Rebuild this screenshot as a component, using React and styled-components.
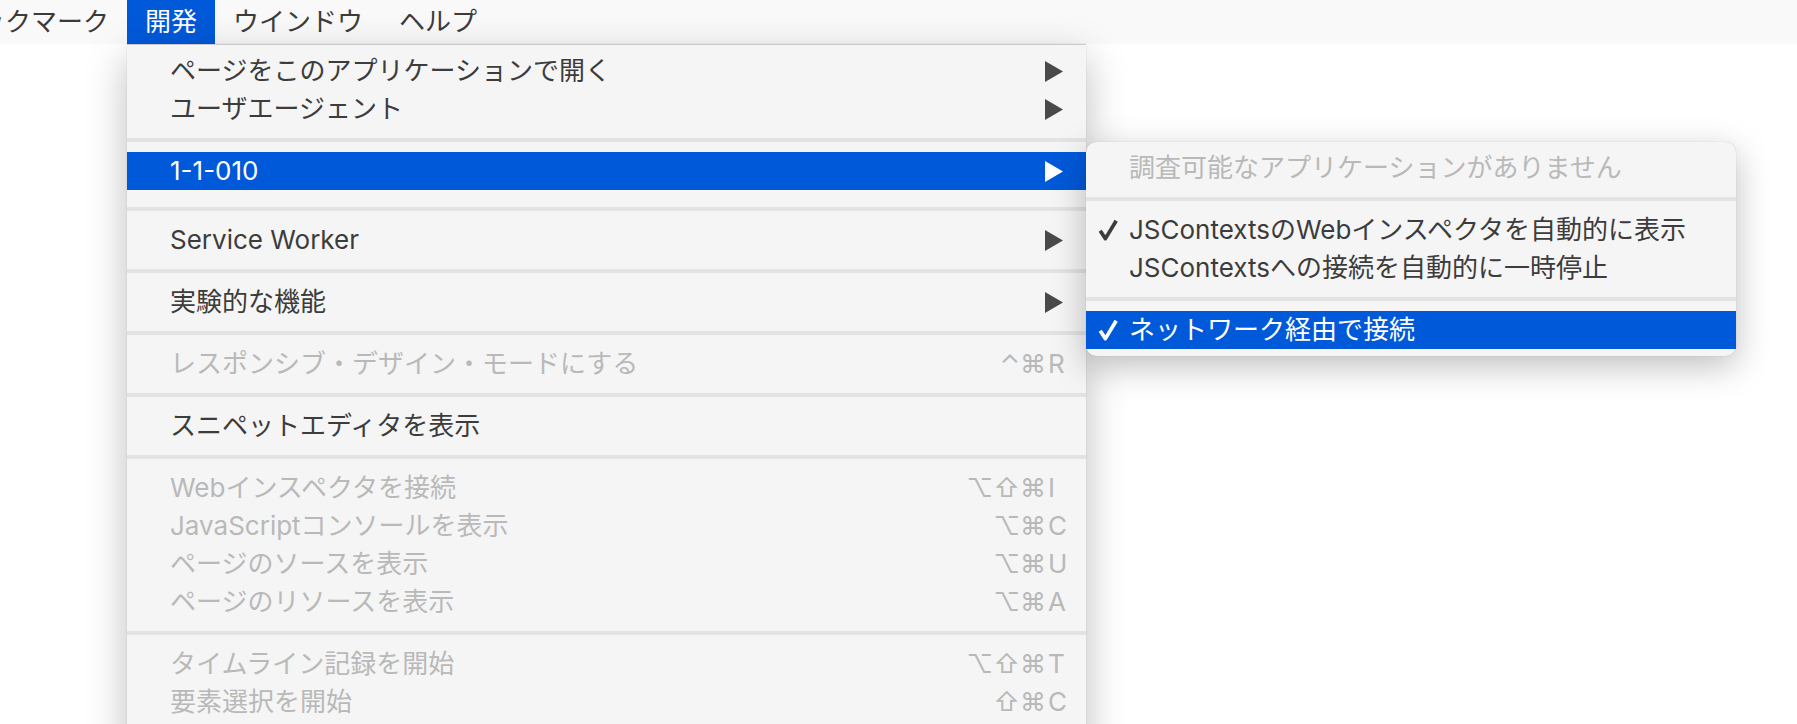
import React from 'react';
import styled, { createGlobalStyle } from 'styled-components';

const GlobalStyle = createGlobalStyle`
  html, body {
    margin: 0;
    padding: 0;
    background: #ffffff;
  }
`;

const Screen = styled.div`
  width: 1797px;
  height: 724px;
  overflow: hidden;
  background: #ffffff;
  font-family: Inter, "Noto Sans CJK JP", sans-serif;
`;

const MenuBar = styled.div`
  position: relative;
  z-index: 2;
  display: flex;
  height: 44px;
  margin-left: -65px;
  background: #f9f9f9;
`;

const MenuTitle = styled.div`
  position: relative;
  padding: 0 18px;
  font-size: 26px;
  line-height: 44px;
  white-space: nowrap;
  color: ${({ $open }) => ($open ? '#ffffff' : '#3b3b3b')};
  background: ${({ $open }) => ($open ? '#0059d9' : 'transparent')};
`;

const Dropdown = styled.div`
  position: absolute;
  top: 100%;
  left: 0;
  width: 959px;
  padding: 7px 0 60px;
  background: #f5f5f5;
  border-top: 1px solid #cbcbcb;
  box-shadow: 0 14px 38px rgba(0, 0, 0, 0.26), 0 0 1px rgba(0, 0, 0, 0.2);
`;

const Submenu = styled.div`
  position: absolute;
  left: 100%;
  top: -10px;
  width: 650px;
  padding: 7px 0;
  background: #f5f5f5;
  border-radius: 10px;
  box-shadow: 0 10px 34px rgba(0, 0, 0, 0.26), 0 0 1px rgba(0, 0, 0, 0.25);
`;

const Row = styled.div`
  position: relative;
  display: flex;
  align-items: center;
  height: 38px;
  padding: 0 12px 0 ${({ $inset }) => $inset}px;
  font-size: 26px;
  line-height: 38px;
  white-space: nowrap;
  color: ${({ $active, $disabled }) =>
    $active ? '#ffffff' : $disabled ? '#b9b9b9' : '#3c3c3c'};
  background: ${({ $active }) => ($active ? '#0059d9' : 'transparent')};
`;

const Label = styled.span`
  flex: 1;
`;

const CheckSlot = styled.span`
  display: flex;
  align-items: center;
  width: 31px;
  height: 38px;
`;

const Separator = styled.div`
  height: 4px;
  margin: ${({ $extra }) => 10 + ($extra || 0)}px 0 10px;
  background: #e3e3e3;
`;

const Shortcut = styled.span`
  display: flex;
  font-family: Inter, "DejaVu Sans", sans-serif;
  font-size: 26px;
`;

const Mods = styled.span`
  text-align: right;
`;

const Key = styled.span`
  width: 26px;
  padding-left: 2px;
`;

const ArrowIcon = styled.svg`
  margin-right: 11px;
  flex: none;
`;

const Arrow = ({ active }) => (
  <ArrowIcon width="18" height="21" viewBox="0 0 18 21">
    <polygon points="0,0 18,10.5 0,21" fill={active ? '#ffffff' : '#494949'} />
  </ArrowIcon>
);

const Check = ({ active }) => (
  <svg width="20" height="22" viewBox="0 0 20 22">
    <path
      d="M2.2 11.8 L7.4 19.6 L18.2 1.8"
      fill="none"
      stroke={active ? '#ffffff' : '#3c3c3c'}
      strokeWidth="3.7"
      strokeLinejoin="round"
    />
  </svg>
);

const subItems = [
  { label: '調査可能なアプリケーションがありません', disabled: true },
  { sep: true },
  { label: 'JSContextsのWebインスペクタを自動的に表示', checked: true },
  { label: 'JSContextsへの接続を自動的に一時停止' },
  { sep: true },
  { label: 'ネットワーク経由で接続', checked: true, active: true },
];

const items = [
  { label: 'ページをこのアプリケーションで開く', arrow: true },
  { label: 'ユーザエージェント', arrow: true },
  { sep: true },
  { label: '1-1-010', arrow: true, active: true, submenu: subItems },
  { sep: true, extra: 7 },
  { label: 'Service Worker', arrow: true },
  { sep: true },
  { label: '実験的な機能', arrow: true },
  { sep: true },
  { label: 'レスポンシブ・デザイン・モードにする', disabled: true, mods: '⌃⌘', key: 'R' },
  { sep: true },
  { label: 'スニペットエディタを表示' },
  { sep: true },
  { label: 'Webインスペクタを接続', disabled: true, mods: '⌥⇧⌘', key: 'I' },
  { label: 'JavaScriptコンソールを表示', disabled: true, mods: '⌥⌘', key: 'C' },
  { label: 'ページのソースを表示', disabled: true, mods: '⌥⌘', key: 'U' },
  { label: 'ページのリソースを表示', disabled: true, mods: '⌥⌘', key: 'A' },
  { sep: true },
  { label: 'タイムライン記録を開始', disabled: true, mods: '⌥⇧⌘', key: 'T' },
  { label: '要素選択を開始', disabled: true, mods: '⇧⌘', key: 'C' },
];

const SubmenuList = ({ list }) => (
  <Submenu>
    {list.map((item, i) =>
      item.sep ? (
        <Separator key={i} />
      ) : (
        <Row key={i} $inset={12} $active={item.active} $disabled={item.disabled}>
          <CheckSlot>{item.checked && <Check active={item.active} />}</CheckSlot>
          <Label>{item.label}</Label>
        </Row>
      )
    )}
  </Submenu>
);

const App = () => {
  return (
    <Screen>
      <GlobalStyle />
      <MenuBar>
        <MenuTitle>ブックマーク</MenuTitle>
        <MenuTitle $open>
          開発
          <Dropdown>
            {items.map((item, i) =>
              item.sep ? (
                <Separator key={i} $extra={item.extra} />
              ) : (
                <Row key={i} $inset={43} $active={item.active} $disabled={item.disabled}>
                  <Label>{item.label}</Label>
                  {item.arrow && <Arrow active={item.active} />}
                  {item.key && (
                    <Shortcut>
                      <Mods>{item.mods}</Mods>
                      <Key>{item.key}</Key>
                    </Shortcut>
                  )}
                  {item.submenu && <SubmenuList list={item.submenu} />}
                </Row>
              )
            )}
          </Dropdown>
        </MenuTitle>
        <MenuTitle>ウインドウ</MenuTitle>
        <MenuTitle>ヘルプ</MenuTitle>
      </MenuBar>
    </Screen>
  );
};

export default App;
